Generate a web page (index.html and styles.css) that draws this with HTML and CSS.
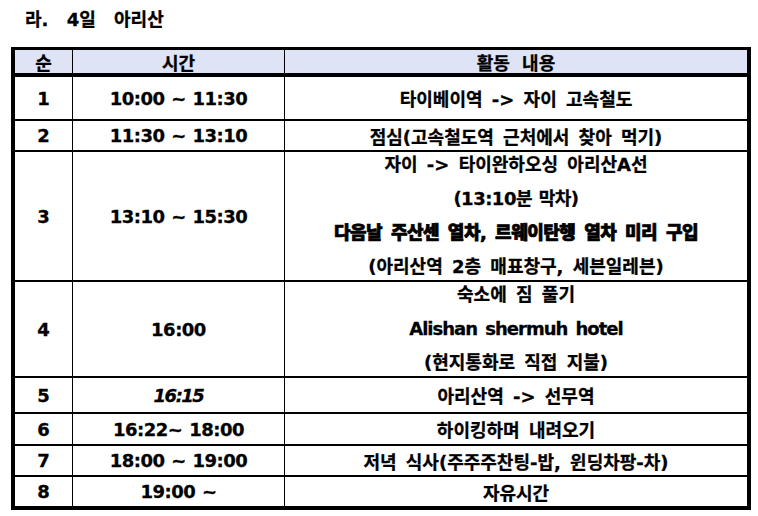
FILE: index.html
```html
<!DOCTYPE html>
<html lang="ko">
<head>
<meta charset="utf-8">
<title>라. 4일 아리산</title>
<link rel="stylesheet" href="styles.css">
</head>
<body>
<div class="title">라. 4일 아리산</div>
<div class="sheet">
  <div class="row head">
    <div class="c">순</div>
    <div class="c">시간</div>
    <div class="c">활동 내용</div>
  </div>
  <div class="row r1">
    <div class="c">1</div>
    <div class="c time">10:00 ~ 11:30</div>
    <div class="c">타이베이역 -&gt; 자이 고속철도</div>
  </div>
  <div class="row r2 sep">
    <div class="c">2</div>
    <div class="c time">11:30 ~ 13:10</div>
    <div class="c">점심(고속철도역 근처에서 찾아 먹기)</div>
  </div>
  <div class="row r3 sep">
    <div class="c">3</div>
    <div class="c time">13:10 ~ 15:30</div>
    <div class="c multi">
      <span>자이 -&gt; 타이완하오싱 아리산A선</span>
      <span class="time">(13:10분 막차)</span>
      <span class="heavy">다음날 주산센 열차, 르웨이탄행 열차 미리 구입</span>
      <span>(아리산역 2층 매표창구, 세븐일레븐)</span>
    </div>
  </div>
  <div class="row r4 sep">
    <div class="c">4</div>
    <div class="c time">16:00</div>
    <div class="c multi">
      <span>숙소에 짐 풀기</span>
      <span class="latin">Alishan shermuh hotel</span>
      <span>(현지통화로 직접 지불)</span>
    </div>
  </div>
  <div class="row r5 sep">
    <div class="c">5</div>
    <div class="c time"><em class="slant">16:15</em></div>
    <div class="c">아리산역 -&gt; 선무역</div>
  </div>
  <div class="row r6 sep">
    <div class="c">6</div>
    <div class="c time">16:22~ 18:00</div>
    <div class="c">하이킹하며 내려오기</div>
  </div>
  <div class="row r7 sep">
    <div class="c">7</div>
    <div class="c time">18:00 ~ 19:00</div>
    <div class="c">저녁 식사(주주주찬팅-밥, 윈딩차팡-차)</div>
  </div>
  <div class="row r8 sep">
    <div class="c">8</div>
    <div class="c time">19:00 ~</div>
    <div class="c">자유시간</div>
  </div>
</div>
</body>
</html>
```
FILE: styles.css
```css
html, body {
  margin: 0;
  padding: 0;
  background: #fff;
}

body {
  font-family: "DejaVu Sans", "Noto Sans CJK KR", sans-serif;
  font-weight: 700;
  font-size: 18px;
  color: #000;
  word-spacing: 3px;
  -webkit-text-stroke: 0.3px #000;
}

.title {
  height: 47px;
  padding-left: 25px;
  line-height: 40px;
  font-size: 18px;
  word-spacing: 12px;
  box-sizing: border-box;
}

.sheet {
  width: 732px;
  margin-left: 11px;
  border: 4px solid #000;
  border-top-width: 3px;
}

.row {
  display: grid;
  grid-template-columns: 57px 211px 462px;
  grid-template-rows: minmax(0, 1fr);
  column-gap: 1px;
  background: #000;
}

.c {
  min-height: 0;
  background: #fff;
  display: flex;
  flex-direction: column;
  align-items: center;
  justify-content: center;
  text-align: center;
  white-space: nowrap;
}

.head {
  height: 23px;
  border-bottom: 4px double #000;
}

.head .c {
  background: #dee3f6;
  word-spacing: 6px;
}

.sep {
  border-top: 2px solid #000;
}

.r1 { height: 42px; }
.r2 { height: 29px; }
.r3 { height: 128px; }
.r4 { height: 94px; }
.r5 { height: 34px; }
.r6 { height: 30px; }
.r7 { height: 29px; }
.r8 { height: 29px; }

.multi {
  line-height: 34px;
}

.time {
  letter-spacing: -0.5px;
  word-spacing: 1px;
}

.latin {
  letter-spacing: -1px;
}

.heavy {
  font-weight: 900;
  letter-spacing: -0.5px;
  -webkit-text-stroke: 0.7px #000;
}

.slant {
  font-style: italic;
  letter-spacing: -1.5px;
}
```
